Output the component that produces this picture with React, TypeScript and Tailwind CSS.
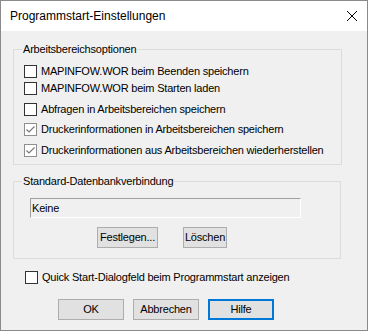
import React from "react";

type CheckProps = { label: string; checked?: boolean; className?: string };

function Check({ label, checked = false, className = "" }: CheckProps) {
  return (
    <div className={`flex items-center h-[13px] ${className}`}>
      <span
        className={`w-[13px] h-[13px] shrink-0 border bg-white flex items-center justify-center ${
          checked ? "border-[#8f8f8f]" : "border-[#333333]"
        }`}
      >
        {checked && (
          <svg width="11" height="11" viewBox="0 0 11 11">
            <polyline points="1.5,5.5 4,8 9.5,2.5" fill="none" stroke="#7a7a7a" strokeWidth="1.2" />
          </svg>
        )}
      </span>
      <span className="ml-[4px] leading-[13px] whitespace-nowrap">{label}</span>
    </div>
  );
}

function Button({ label, width, focused = false }: { label: string; width: string; focused?: boolean }) {
  return (
    <button
      className={`${width} h-[21px] bg-[#e1e1e1] flex items-center justify-center leading-none ${
        focused ? "border-2 border-[#0078d7]" : "border border-[#adadad]"
      }`}
    >
      {label}
    </button>
  );
}

export default function App() {
  return (
    <div className="w-[368px] h-[331px] border border-[#8a8a8a] bg-[#f0f0f0] flex flex-col text-[11px] tracking-[-0.2px] text-black font-['Liberation_Sans',Arial,sans-serif]">
      <div className="h-[30px] bg-white flex items-center justify-between pl-[9px] pr-[9px] shrink-0">
        <span className="text-[12px] tracking-normal text-black">Programmstart-Einstellungen</span>
        <svg width="12" height="12" viewBox="0 0 12 12">
          <path d="M1 1 L11 11 M11 1 L1 11" stroke="#000" strokeWidth="1" />
        </svg>
      </div>

      <div className="flex flex-col pl-[12px]">
        <fieldset className="mt-[12px] w-[329px] border border-[#dcdcdc] pl-[10px] pt-[9px] pb-[7px]">
          <legend className="ml-[-2px] px-[1px] leading-[13px]">Arbeitsbereichsoptionen</legend>
          <Check label="MAPINFOW.WOR beim Beenden speichern" />
          <Check label="MAPINFOW.WOR beim Starten laden" className="mt-[4px]" />
          <Check label="Abfragen in Arbeitsbereichen speichern" className="mt-[8px]" />
          <Check label="Druckerinformationen in Arbeitsbereichen speichern" checked className="mt-[7px]" />
          <Check label="Druckerinformationen aus Arbeitsbereichen wiederherstellen" checked className="mt-[8px]" />
        </fieldset>

        <fieldset className="mt-[10px] w-[328px] border border-[#dcdcdc] pl-[16px] pt-[10px] pb-[10px]">
          <legend className="ml-[-8px] px-[1px] leading-[13px]">Standard-Datenbankverbindung</legend>
          <div className="w-[271px] h-[20px] border border-t-[#a0a0a0] border-l-[#a0a0a0] border-b-white border-r-white flex items-center pl-[1px]">
            Keine
          </div>
          <div className="mt-[9px] flex pl-[67px] gap-[25px]">
            <Button label="Festlegen..." width="w-[61px]" />
            <Button label="Löschen" width="w-[44px]" />
          </div>
        </fieldset>

        <Check label="Quick Start-Dialogfeld beim Programmstart anzeigen" className="mt-[12px] ml-[12px]" />

        <div className="mt-[15px] flex pl-[45px] gap-[9px]">
          <Button label="OK" width="w-[66px]" />
          <Button label="Abbrechen" width="w-[66px]" />
          <Button label="Hilfe" width="w-[66px]" focused />
        </div>
      </div>
    </div>
  );
}
